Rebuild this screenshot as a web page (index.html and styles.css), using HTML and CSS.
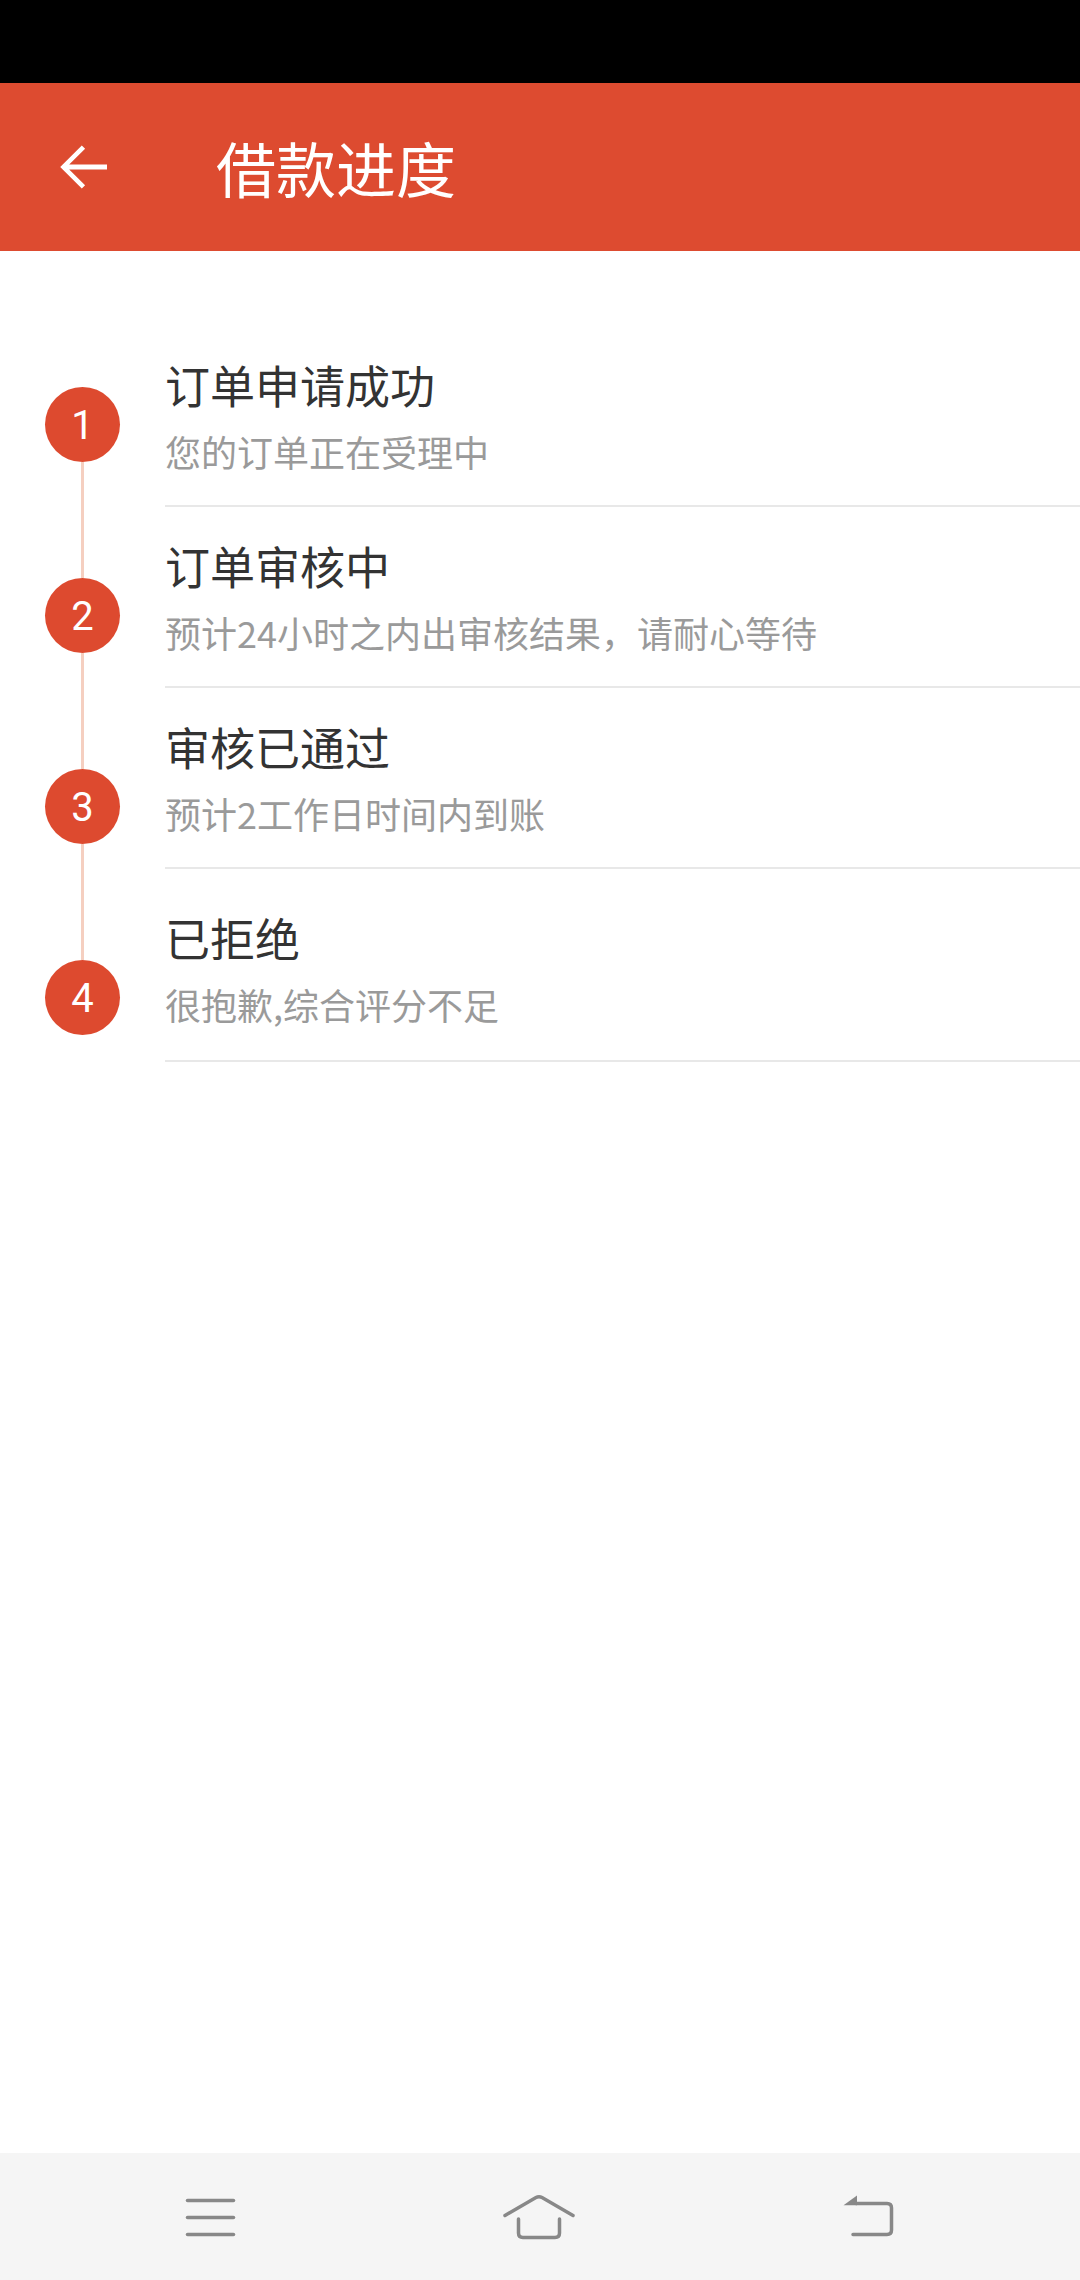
FILE: index.html
```html
<!DOCTYPE html>
<html lang="zh-CN">
<head>
  <meta charset="UTF-8">
  <title>借款进度</title>
  <link rel="stylesheet" href="styles.css">
  <meta name="viewport" content="width=device-width, initial-scale=1">
</head>
<body>

  <div class="status-bar"></div>

  <header class="app-bar">
    <span class="back-btn">
      <svg viewBox="0 0 24 24" width="72" height="72">
        <path d="M20 11.2H7.4l5.3-5.3L11.6 4.8 4.4 12l7.2 7.2 1.1-1.1-5.3-5.3H20z" fill="#fff"/>
      </svg>
    </span>
    <h1 class="app-title">借款进度</h1>
  </header>

  <main class="progress">
    <div class="rail">
      <span class="dot">1</span>
      <span class="link"></span>
      <span class="dot">2</span>
      <span class="link"></span>
      <span class="dot">3</span>
      <span class="link"></span>
      <span class="dot">4</span>
    </div>

    <ul class="steps">
      <li class="step">
        <p class="step-title">订单申请成功</p>
        <p class="step-desc">您的订单正在受理中</p>
      </li>
      <li class="step">
        <p class="step-title">订单审核中</p>
        <p class="step-desc">预计24小时之内出审核结果，请耐心等待</p>
      </li>
      <li class="step">
        <p class="step-title">审核已通过</p>
        <p class="step-desc">预计2工作日时间内到账</p>
      </li>
      <li class="step step-last">
        <p class="step-title">已拒绝</p>
        <p class="step-desc">很抱歉,综合评分不足</p>
      </li>
    </ul>
  </main>

  <nav class="nav-bar">
    <svg class="nav-icon" viewBox="0 0 80 50" width="80" height="50">
      <g stroke="#888" stroke-width="3.5" stroke-linecap="round" fill="none">
        <line x1="17.5" y1="8.5" x2="63.5" y2="8.5"/>
        <line x1="17.5" y1="25.5" x2="63.5" y2="25.5"/>
        <line x1="17.5" y1="42.5" x2="63.5" y2="42.5"/>
      </g>
    </svg>
    <svg class="nav-icon" viewBox="0 0 80 50" width="80" height="50">
      <g stroke="#888" stroke-width="3.5" stroke-linecap="round" stroke-linejoin="round" fill="none">
        <path d="M6 23.5 L37 5.5 Q40 3.8 43 5.5 L74 23.5"/>
        <path d="M19.5 27 V41 Q19.5 45.5 24 45.5 H56 Q60.5 45.5 60.5 41 V27"/>
      </g>
    </svg>
    <svg class="nav-icon" viewBox="0 0 80 50" width="80" height="50">
      <path d="M15.5 13.3 L29 3.5 V13.3 Z" fill="#888"/>
      <path d="M28 11.5 H59 Q63.5 11.5 63.5 16 V38 Q63.5 42.5 59 42.5 H25" stroke="#888" stroke-width="3.5" stroke-linecap="round" fill="none"/>
    </svg>
  </nav>

</body>
</html>
```

FILE: styles.css
```css
* {
  box-sizing: border-box;
}
body {
  margin: 0;
  width: 1080px;
  height: 2280px;
  display: flex;
  flex-direction: column;
  background: #fff;
  font-family: "Noto Sans CJK SC", "Noto Sans", sans-serif;
  overflow: hidden;
}

.status-bar {
  height: 83px;
  background: #000;
}

.app-bar {
  height: 168px;
  background: #dd4b30;
  display: flex;
  align-items: center;
}
.back-btn {
  width: 72px;
  height: 72px;
  margin-left: 47px;
  display: flex;
}
.app-title {
  margin: 0 0 0 97px;
  font-size: 60px;
  font-weight: normal;
  color: #fff;
  line-height: 1;
}

.progress {
  flex: 1;
  display: flex;
  align-items: flex-start;
}
.rail {
  width: 165px;
  display: flex;
  flex-direction: column;
  align-items: center;
  padding-top: 136px;
}
.dot {
  width: 75px;
  height: 75px;
  border-radius: 50%;
  background: #dd4a2f;
  color: #fff;
  display: flex;
  align-items: center;
  justify-content: center;
  padding-top: 3px;
  font-family: Roboto, "Noto Sans", sans-serif;
  font-size: 40px;
  line-height: 1;
}
.link {
  width: 3px;
  height: 116px;
  background: #f5cfc0;
}

.steps {
  flex: 1;
  list-style: none;
  margin: 75px 0 0;
  padding: 0;
}
.step {
  padding: 32px 0 30px;
  border-bottom: 2px solid #e8e8e8;
}
.step-last {
  padding-top: 42px;
  padding-bottom: 32px;
}
.step-title {
  margin: 0;
  font-size: 45px;
  line-height: 54px;
  color: #333;
}
.step-desc {
  margin: 15px 0 0;
  font-size: 36px;
  line-height: 48px;
  color: #9a9a9a;
}

.nav-bar {
  height: 127px;
  background: #f5f5f5;
  display: flex;
  align-items: center;
  padding-left: 170px;
  gap: 249px;
}
.nav-icon {
  display: block;
}
```
